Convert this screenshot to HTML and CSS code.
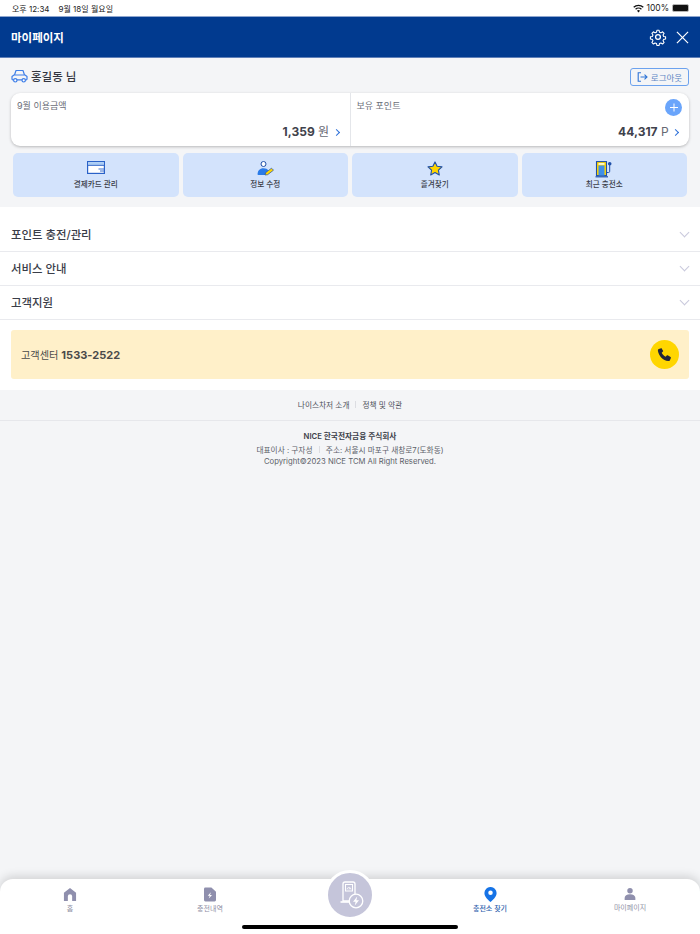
FILE: index.html
```html
<!DOCTYPE html>
<html lang="ko">
<head>
    <meta charset="UTF-8">
    <meta name="viewport" content="width=device-width, initial-scale=1.0">
    <title>마이페이지</title>
    <link rel="stylesheet" href="styles.css">
</head>
<body>

<div class="status-bar">
    <span>오후 12:34</span>
    <span class="status-date">9월 18일 월요일</span>
    <span class="status-right">
        <svg width="11" height="9" viewBox="0 0 13 10"><path d="M6.500 9.600 4.700 7.600a2.600 2.600 0 0 1 3.600 0zM3.600 6.500 2.500 5.300a5.800 5.800 0 0 1 8 0L9.400 6.500a4.200 4.200 0 0 0-5.800 0zM1.400 4.200.3 3a9 9 0 0 1 12.400 0l-1.100 1.200a7.400 7.400 0 0 0-10.200 0z" fill="#111"/></svg>
        <span class="status-pct">100%</span>
        <span class="battery"><span class="battery-fill"></span></span>
    </span>
</div>

<header class="top-bar">
    <h1>마이페이지</h1>
    <div class="top-icons">
        <svg width="18" height="18" viewBox="0 0 24 24" fill="none" stroke="#fff" stroke-width="1.700" stroke-linejoin="round"><circle cx="12" cy="12" r="3.200"/><path d="M10.300 1.500h3.400l.6 3 2.300 1 2.600-1.700 2.400 2.400-1.700 2.600 1 2.300 3 .6v3.400l-3 .6-1 2.300 1.700 2.600-2.400 2.400-2.600-1.700-2.300 1-.6 3h-3.400l-.6-3-2.300-1-2.600 1.700-2.400-2.400 1.700-2.600-1-2.300-3-.6v-3.400l3-.6 1-2.300-1.700-2.600 2.400-2.400 2.600 1.700 2.300-1z" transform="translate(1.800 1.800) scale(.85)"/></svg>
        <svg width="13" height="13" viewBox="0 0 14 14" stroke="#fff" stroke-width="1.300"><path d="M1 1l12 12M13 1 1 13"/></svg>
    </div>
</header>

<section class="summary">
    <div class="user-row">
        <div class="user-name">
            <svg width="17" height="14" viewBox="0 0 17 14" fill="none" stroke="#3f7fe8" stroke-width="1.200" stroke-linejoin="round"><path d="M3.500 6 5 1.500h7L13.500 6"/><path d="M1 10V7.500L3 6h11l2 1.500V10a.8.800 0 0 1-.8.800H1.800A.8.800 0 0 1 1 10z"/><circle cx="4.300" cy="11.300" r="1.700" fill="#fff"/><circle cx="12.700" cy="11.300" r="1.700" fill="#fff"/></svg>
            <span>홍길동 님</span>
        </div>
        <a class="logout" href="#">
            <svg width="11" height="10" viewBox="0 0 11 10" fill="none" stroke="#2f74d6" stroke-width="1.100"><path d="M4 .8H1.200v8.400H4M3.500 5h6.500M7.500 2.600 10 5 7.500 7.400"/></svg>
            로그아웃
        </a>
    </div>

    <div class="balance-card">
        <div class="balance-col">
            <div class="balance-label">9월 이용금액</div>
            <div class="balance-value"><b>1,359</b> 원 <span class="more"></span></div>
        </div>
        <div class="balance-col">
            <div class="balance-label">보유 포인트</div>
            <span class="plus"></span>
            <div class="balance-value"><b>44,317</b> P <span class="more"></span></div>
        </div>
    </div>

    <div class="shortcuts">
        <a class="shortcut" href="#">
            <svg width="18" height="13" viewBox="0 0 18 13"><rect x=".6" y=".6" width="16.800" height="11.800" fill="#fff" stroke="#2a62c8" stroke-width="1.200"/><rect x="1.200" y="1.200" width="15.600" height="2.600" fill="#a9cdf5"/><rect x="1" y="3.800" width="16" height="1" fill="#2a62c8"/><path d="M11.500 8h5.500M13 10h4" stroke="#2a62c8" stroke-width=".9"/></svg>
            <span>결제카드 관리</span>
        </a>
        <a class="shortcut" href="#">
            <svg width="17" height="15" viewBox="0 0 17 15"><circle cx="6.500" cy="3" r="2.500" fill="#fff" stroke="#1f4fa8" stroke-width="1"/><path d="M.5 13.500c0-4 2.400-6.300 6-6.300 2.400 0 3.800.8 4.800 2.100L8.500 14H1.300z" fill="#2a7be8"/><path d="M8 14l.6-2.300 5.900-4.500 2 2-5.900 4.500z" fill="#ffd500" stroke="#1f4fa8" stroke-width=".7"/></svg>
            <span>정보 수정</span>
        </a>
        <a class="shortcut" href="#">
            <svg width="16" height="15" viewBox="0 0 16 15"><path d="M8 .9l2.100 4.400 4.900.6-3.600 3.300.9 4.800L8 11.600 3.700 14l.9-4.800L1 5.900l4.900-.6z" fill="#ffd500" stroke="#1f4fa8" stroke-width="1.100" stroke-linejoin="round"/></svg>
            <span>즐겨찾기</span>
        </a>
        <a class="shortcut" href="#">
            <svg width="18" height="17" viewBox="0 0 18 17"><rect x="1.500" y=".6" width="10" height="14" fill="#ffd500" stroke="#1f4fa8" stroke-width="1.100"/><rect x="3.500" y="4.500" width="6" height="10" fill="#3f8fe8"/><rect x="3.500" y="2.200" width="6" height="1.500" fill="#fff"/><path d="M.5 15.800h12.500" stroke="#1f4fa8" stroke-width="1.200"/><path d="M12 11.500h1.500c.8 0 1.200-.4 1.200-1.200V4" fill="none" stroke="#1f4fa8"/><circle cx="14.700" cy="2.800" r="1.800" fill="#1f4fa8"/></svg>
            <span>최근 충전소</span>
        </a>
    </div>
</section>

<section class="menu">
    <div class="menu-item"><span class="menu-title">포인트 충전/관리</span><span class="chevron"></span></div>
    <div class="menu-item"><span class="menu-title">서비스 안내</span><span class="chevron"></span></div>
    <div class="menu-item"><span class="menu-title">고객지원</span><span class="chevron"></span></div>
    <div class="call-box">
        <span>고객센터 <b>1533-2522</b></span>
        <span class="call-btn">
            <svg width="15" height="15" viewBox="0 0 24 24"><path d="M6.600 1.800 2.900 3.300C1.700 3.900 1.300 5 1.500 6.300c1.300 8 8.200 14.900 16.200 16.200 1.300.2 2.400-.2 3-1.400l1.500-3.700c.2-.6 0-1.200-.5-1.500l-4.600-2.700c-.5-.3-1.100-.2-1.500.2l-1.800 2c-2.800-1.300-5-3.500-6.300-6.300l2-1.800c.4-.4.500-1 .2-1.500L7.400 2.300c-.2-.4-.5-.6-.8-.5z" fill="#22263a"/></svg>
        </span>
    </div>
</section>

<div class="foot-links">
    <a href="#">나이스차저 소개</a>
    <i></i>
    <a href="#">정책 및 약관</a>
</div>

<footer class="company">
    <p class="company-name">NICE 한국전자금융 주식회사</p>
    <p>대표이사 : 구자성 <i></i> 주소: 서울시 마포구 새창로7(도화동)</p>
    <p>Copyright©2023 NICE TCM All Right Reserved.</p>
</footer>

<nav class="tab-bar">
    <a class="tab" href="#">
        <svg width="14" height="15" viewBox="0 0 15 15"><path d="M7.500.5 14 5.500V14.500H9.800V9.500a2.300 2.300 0 0 0-4.600 0V14.500H1V5.500z" fill="#8f8fad"/></svg>
        <span>홈</span>
    </a>
    <a class="tab" href="#">
        <svg width="12" height="15" viewBox="0 0 13 15"><path d="M1.500 0H8l5 4.500V13.500A1.500 1.500 0 0 1 11.500 15h-10A1.500 1.500 0 0 1 0 13.500v-12A1.500 1.500 0 0 1 1.500 0z" fill="#8f8fad"/><path d="M7.500 5 4 8.800h2.200l-1 3 3.500-3.800H6.500z" fill="#fff"/></svg>
        <span>충전내역</span>
    </a>
    <div class="tab tab-center">
        <span class="center-btn">
            <svg class="center-icon" width="24" height="28" viewBox="0 0 24 28"><path d="M3 3A2 2 0 0 1 5 1h8a2 2 0 0 1 2 2v17H3z" fill="none" stroke="#fff" stroke-width="1.300"/><rect x="5.500" y="3.500" width="7" height="6.500" fill="none" stroke="#fff" stroke-width="1"/><path d="M7 8.500a2 2 0 0 1 4 0M9 8.500l1-1.500" fill="none" stroke="#fff" stroke-width=".8"/><path d="M.5 21h16" stroke="#fff" stroke-width="1.600"/><circle cx="16" cy="20" r="6.800" fill="#c5c5da" stroke="#fff" stroke-width="1.300"/><path d="M17.200 15.500 13 20.800h2.600l-.8 3.700 4.200-5.300h-2.600z" fill="#fff"/></svg>
        </span>
    </div>
    <a class="tab tab-on" href="#">
        <svg width="13" height="15" viewBox="0 0 13 16"><path d="M6.500 0A6.300 6.300 0 0 1 13 6.300c0 4-4 7.400-6.500 9.700C4 13.700 0 10.300 0 6.300A6.300 6.300 0 0 1 6.500 0z" fill="#1673e6"/><circle cx="6.500" cy="6.200" r="2.400" fill="#fff"/></svg>
        <span>충전소 찾기</span>
    </a>
    <a class="tab" href="#">
        <svg width="12" height="14" viewBox="0 0 15 15"><circle cx="7.500" cy="3.500" r="3.400" fill="#8f8fad"/><path d="M.8 15v-2.500c0-3 2.700-4.700 6.700-4.700s6.700 1.700 6.700 4.700V15z" fill="#8f8fad"/></svg>
        <span>마이페이지</span>
    </a>
    <div class="home-bar"></div>
</nav>

</body>
</html>
```

FILE: styles.css
```css
* {
    box-sizing: border-box;
}
body {
    font-family: Inter, "Noto Sans CJK KR", sans-serif;
    margin: 0;
    padding: 0;
    height: 934px;
    overflow: hidden;
    position: relative;
    background-color: #f4f5f7;
    color: #3c3f4a;
}
a {
    color: inherit;
    text-decoration: none;
}
p {
    margin: 0;
}

.status-bar {
    height: 16px;
    background-color: #fff;
    display: flex;
    align-items: center;
    padding: 0 11px 0 12px;
    font-size: 8px;
    color: #222;
}
.status-date {
    margin-left: 9px;
}
.status-right {
    margin-left: auto;
    display: flex;
    align-items: center;
    gap: 2px;
}
.status-pct {
    font-size: 8.500px;
}
.battery {
    width: 17px;
    height: 8px;
    border: 1px solid #b5b5b5;
    border-radius: 2px;
    background-color: #111;
    margin-left: 1px;
}
.battery-fill {
    display: block;
}

.top-bar {
    height: 42px;
    background-color: #013a8f;
    border-top: 1px solid #8ea6cf;
    border-bottom: 1px solid #5f7fb8;
    display: flex;
    align-items: center;
    justify-content: space-between;
    padding: 0 11px;
    color: #fff;
}
.top-bar h1 {
    margin: 0;
    font-size: 11.500px;
    font-weight: 700;
}
.top-icons {
    display: flex;
    align-items: center;
    gap: 9px;
}

.summary {
    padding: 9px 11px 10px;
}
.user-row {
    display: flex;
    align-items: center;
    justify-content: space-between;
    height: 19px;
}
.user-name {
    display: flex;
    align-items: center;
    gap: 3px;
    padding-bottom: 2px;
    font-size: 11.500px;
    font-weight: 500;
    color: #33363f;
}
.logout {
    display: flex;
    align-items: center;
    justify-content: center;
    gap: 3px;
    width: 59px;
    height: 18px;
    border: 1px solid #6ca2ee;
    border-radius: 3px;
    font-size: 8.500px;
    color: #5d86c4;
}

.balance-card {
    display: flex;
    height: 53px;
    margin-top: 7px;
    background-color: #fff;
    border-radius: 9px;
    box-shadow: 0 1px 3px rgba(0, 0, 0, 0.25);
}
.balance-col {
    flex: 1;
    position: relative;
    display: flex;
    flex-direction: column;
    justify-content: space-between;
    padding: 6px 9px 7px 6px;
}
.balance-col + .balance-col {
    border-left: 1px solid #e4e6ea;
}
.balance-label {
    font-size: 9px;
    color: #6b6e78;
}
.balance-value {
    text-align: right;
    font-size: 12px;
    color: #666973;
}
.balance-value b {
    font-size: 12px;
    font-weight: 700;
    color: #3f424c;
}
.more {
    display: inline-block;
    width: 5px;
    height: 5px;
    border-top: 1.500px solid #2c6fd8;
    border-right: 1.500px solid #2c6fd8;
    transform: rotate(45deg);
    margin: 0 2px 1px 1px;
}
.plus {
    position: absolute;
    top: 6px;
    right: 7px;
    width: 17px;
    height: 17px;
    border-radius: 50%;
    background-color: #6aa5fb;
}
.plus::before,
.plus::after {
    content: "";
    position: absolute;
    background-color: #fff;
    left: 4.500px;
    top: 8px;
    width: 8px;
    height: 1px;
}
.plus::after {
    transform: rotate(90deg);
}

.shortcuts {
    display: flex;
    gap: 4px;
    margin: 7px 2px 0;
}
.shortcut {
    flex: 1;
    height: 44px;
    background-color: #d3e3fc;
    border-radius: 5px;
    display: flex;
    flex-direction: column;
    align-items: center;
    padding: 8px 0 7px;
    font-size: 7.600px;
    line-height: 10px;
    font-weight: 500;
    color: #3a3d48;
}
.shortcut span {
    margin-top: auto;
}

.menu {
    background-color: #fff;
    padding: 11px 0;
}
.menu-item {
    height: 34px;
    padding: 0 11px;
    display: flex;
    align-items: center;
    justify-content: space-between;
    border-bottom: 1px solid #e9eaee;
    font-size: 11.400px;
    font-weight: 500;
    color: #3a3d48;
}
.menu-title {
    padding-bottom: 2px;
}
.chevron {
    width: 7px;
    height: 7px;
    border-right: 1px solid #c9c9dc;
    border-bottom: 1px solid #c9c9dc;
    transform: rotate(45deg);
    margin: 0 1.500px 3.500px 0;
}
.call-box {
    margin: 10px 11px 0;
    height: 49px;
    padding: 0 10px;
    background-color: #fff0c9;
    border-radius: 3px;
    display: flex;
    align-items: center;
    justify-content: space-between;
    font-size: 10.200px;
    color: #4a4a4a;
}
.call-box b {
    font-size: 11px;
}
.call-btn {
    width: 29px;
    height: 29px;
    border-radius: 50%;
    background-color: #ffd600;
    display: flex;
    align-items: center;
    justify-content: center;
}

.foot-links {
    height: 31px;
    display: flex;
    align-items: center;
    justify-content: center;
    gap: 6px;
    padding-bottom: 2px;
    font-size: 7.700px;
    color: #4e515c;
    border-bottom: 1px solid #e6e7eb;
}
.foot-links i,
.company i {
    display: inline-block;
    width: 1px;
    height: 7px;
    background-color: #dcdde2;
}
.company i {
    margin: 0 4px;
}
.company {
    padding-top: 10px;
    text-align: center;
    font-size: 7.700px;
    line-height: 11px;
    color: #5c5f69;
}
.company-name {
    font-weight: 600;
    color: #3c3f4a;
    margin-bottom: 3px;
}

.tab-bar {
    position: absolute;
    left: 0;
    right: 0;
    bottom: 0;
    height: 55px;
    background-color: #fff;
    border-radius: 13px 13px 0 0;
    box-shadow: 0 -3px 10px rgba(0, 0, 0, 0.14);
    display: flex;
}
.tab {
    flex: 1;
    display: flex;
    flex-direction: column;
    align-items: center;
    gap: 2px;
    padding-top: 8px;
    font-size: 7px;
    line-height: 9px;
    color: #8f8fa5;
}
.tab-on {
    color: #2f62ad;
    font-weight: 500;
}
.tab-center {
    position: relative;
}
.center-btn {
    position: absolute;
    top: -9px;
    left: 50%;
    margin-left: -25px;
    width: 50px;
    height: 50px;
    border-radius: 50%;
    background-color: #c5c5da;
    border: 3px solid #fff;
    display: flex;
    align-items: center;
    justify-content: center;
}
.center-icon {
    margin-left: 3px;
}
.home-bar {
    position: absolute;
    left: 242px;
    bottom: 5px;
    width: 216px;
    height: 4px;
    border-radius: 2px;
    background-color: #000;
}
```
